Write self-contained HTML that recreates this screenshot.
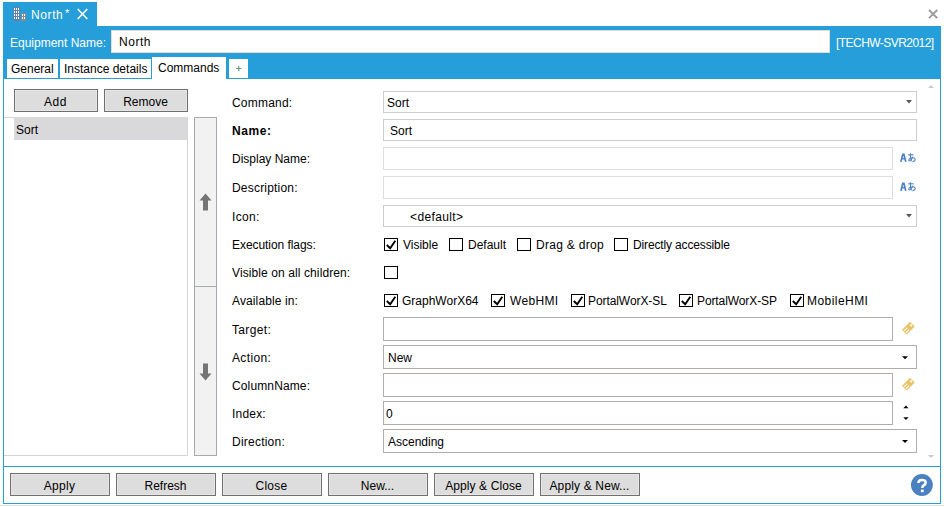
<!DOCTYPE html>
<html><head><meta charset="utf-8">
<style>
*{box-sizing:border-box;margin:0;padding:0}
html,body{width:944px;height:507px;overflow:hidden;background:#fff}
body{position:relative;font-family:"Liberation Sans",sans-serif;font-size:12px;color:#000}
.a{position:absolute}
.t{position:absolute;white-space:pre;line-height:14px}
.blue{background:#259ed9}
.tab{position:absolute;background:#fff;top:59px;height:19px}
.btn{position:absolute;background:#dddddd;border:1px solid #707070;box-shadow:inset 0 0 0 1px #e6e6e6;text-align:center;line-height:14px;padding-top:5px;text-indent:-1px}
.fld{position:absolute;left:383px;border:1px solid #cfcccf;background:#fff}
.lbl{position:absolute;left:232px;white-space:pre;line-height:14px}
.cb{position:absolute;width:14px;height:13px;border:1px solid #000;background:#fff}
.cb svg{position:absolute;left:0;top:0}
.ck{position:absolute;white-space:pre;line-height:14px}
</style></head>
<body>
<!-- tab header -->
<div class="a blue" style="left:3px;top:2px;width:94px;height:24px"></div>
<svg class="a" style="left:13px;top:7px" width="14" height="15" viewBox="0 0 14 15">
  <rect x="0" y="0" width="7" height="14" fill="#5c81b3"/>
  <g fill="#fff">
    <rect x="1" y="1" width="1" height="2"/><rect x="3" y="1" width="1" height="2"/><rect x="5" y="1" width="1" height="2"/>
    <rect x="1" y="4" width="1" height="2"/><rect x="3" y="4" width="1" height="2"/><rect x="5" y="4" width="1" height="2"/>
    <rect x="1" y="7" width="1" height="2"/><rect x="3" y="7" width="1" height="2"/><rect x="5" y="7" width="1" height="2"/>
    <rect x="1" y="10" width="1" height="2"/><rect x="3" y="10" width="1" height="2"/><rect x="5" y="10" width="1" height="2"/>
  </g>
  <rect x="8" y="6" width="5" height="8" fill="#8a8a8a"/>
  <g fill="#fff">
    <rect x="9" y="7" width="1" height="2"/><rect x="11" y="7" width="1" height="2"/>
    <rect x="9" y="10" width="1" height="2"/><rect x="11" y="10" width="1" height="2"/>
  </g>
</svg>
<div class="t" style="left:31px;top:8px;color:#fff;letter-spacing:0.6px">North</div>
<div class="t" style="left:65px;top:6px;color:#fff;font-size:11px">*</div>
<svg class="a" style="left:77px;top:8px" width="11" height="12" viewBox="0 0 11 12"><path d="M0.7 1L10.3 11M10.3 1L0.7 11" stroke="#fff" stroke-width="1.6"/></svg>
<!-- window close -->
<svg class="a" style="left:928px;top:9px" width="10" height="10" viewBox="0 0 10 10"><path d="M1 1L9.2 9.2M9.2 1L1 9.2" stroke="#9a9a9a" stroke-width="1.9"/></svg>

<!-- blue frame -->
<div class="a blue" style="left:3px;top:26px;width:938px;height:53px"></div>
<div class="a blue" style="left:3px;top:79px;width:1px;height:425px"></div>
<div class="a blue" style="left:940px;top:79px;width:1px;height:425px"></div>
<div class="a blue" style="left:3px;top:466px;width:938px;height:1px"></div>
<div class="a blue" style="left:3px;top:503px;width:938px;height:1px"></div>
<div class="a" style="left:0;top:505px;width:944px;height:1px;background:#e4e4e4"></div>

<div class="t" style="left:10px;top:36px;color:#fff">Equipment Name:</div>
<div class="a" style="left:111px;top:30px;width:719px;height:23px;background:#fff;border:1px solid #e8dcd0"></div>
<div class="t" style="left:119px;top:35px;letter-spacing:0.55px">North</div>
<div class="t" style="left:836px;top:36px;color:#fff;letter-spacing:-0.55px">[TECHW-SVR2012]</div>

<!-- tabs -->
<div class="tab" style="left:7px;width:51px"></div>
<div class="t" style="left:11px;top:62px">General</div>
<div class="tab" style="left:60px;width:91px"></div>
<div class="t" style="left:64px;top:62px">Instance details</div>
<div class="tab" style="left:152px;top:57px;width:74px;height:23px"></div>
<div class="t" style="left:158px;top:61px">Commands</div>
<div class="tab" style="left:229px;width:19px"></div>
<svg class="a" style="left:235px;top:65px" width="8" height="8" viewBox="0 0 8 8"><path d="M1 3.5H6.5M3.75 0.8V6.3" stroke="#6a9886" stroke-width="1.15"/></svg>

<!-- left panel -->
<div class="btn" style="left:14px;top:89px;width:84px;height:23px;letter-spacing:0.6px">Add</div>
<div class="btn" style="left:104px;top:89px;width:84px;height:23px">Remove</div>
<div class="a" style="left:4px;top:117px;width:184px;height:339px;border:1px solid #d6d4d6;border-left:none;background:#fff"></div>
<div class="a" style="left:14px;top:117px;width:173px;height:23px;background:#d9d8da"></div>
<div class="t" style="left:16px;top:123px">Sort</div>

<div class="a" style="left:194px;top:117px;width:23px;height:170px;background:#f2f2f2;border:1px solid #a5abaf"></div>
<div class="a" style="left:194px;top:286px;width:23px;height:170px;background:#f2f2f2;border:1px solid #a5abaf"></div>
<svg class="a" style="left:199px;top:193px" width="13" height="18" viewBox="0 0 13 18"><path d="M6.5 0.5L12.5 7.5H9V17.5H4V7.5H0.5Z" fill="#757575"/></svg>
<svg class="a" style="left:199px;top:363px" width="13" height="18" viewBox="0 0 13 18"><path d="M6.5 17.5L12.5 10.5H9V0.5H4V10.5H0.5Z" fill="#757575"/></svg>

<!-- labels -->
<div class="lbl" style="top:96px;letter-spacing:0.2px">Command:</div>
<div class="lbl" style="top:124px;font-weight:bold;letter-spacing:0.55px">Name:</div>
<div class="lbl" style="top:152px">Display Name:</div>
<div class="lbl" style="top:181px;letter-spacing:0.2px">Description:</div>
<div class="lbl" style="top:210px;letter-spacing:0.3px">Icon:</div>
<div class="lbl" style="top:238px;letter-spacing:-0.06px">Execution flags:</div>
<div class="lbl" style="top:266px;letter-spacing:0.1px">Visible on all children:</div>
<div class="lbl" style="top:294px;letter-spacing:0.12px">Available in:</div>
<div class="lbl" style="top:323px;letter-spacing:0.35px">Target:</div>
<div class="lbl" style="top:351px;letter-spacing:0.35px">Action:</div>
<div class="lbl" style="top:379px;letter-spacing:0.13px">ColumnName:</div>
<div class="lbl" style="top:407px;letter-spacing:0.2px">Index:</div>
<div class="lbl" style="top:435px;letter-spacing:0.23px">Direction:</div>

<!-- fields -->
<div class="fld" style="top:91px;width:534px;height:22px"></div>
<div class="t" style="left:387px;top:96px">Sort</div>
<svg class="a" style="left:906px;top:100px" width="6" height="4"><path d="M0 0H6L3 3.6Z" fill="#5a5a5a"/></svg>

<div class="fld" style="top:119px;width:534px;height:22px"></div>
<div class="t" style="left:390px;top:124px">Sort</div>

<div class="fld" style="top:147px;width:510px;height:23px;border-color:#dcdce6"></div>

<div class="fld" style="top:176px;width:510px;height:23px;border-color:#dcdce6"></div>


<div class="fld" style="top:205px;width:534px;height:22px"></div>
<div class="t" style="left:410px;top:210px;letter-spacing:0.38px">&lt;default&gt;</div>
<svg class="a" style="left:906px;top:214px" width="6" height="4"><path d="M0 0H6L3 3.6Z" fill="#5a5a5a"/></svg>

<!-- checkbox rows -->
<div class="cb" style="left:384px;top:238px"><svg width="12" height="11"><path d="M1.8 6L5.2 9.2L10.3 1.8" fill="none" stroke="#000" stroke-width="1.9"/></svg></div><div class="ck" style="left:403px;top:238px">Visible</div>
<div class="cb" style="left:449px;top:238px"></div><div class="ck" style="left:468px;top:238px">Default</div>
<div class="cb" style="left:517px;top:238px"></div><div class="ck" style="left:536px;top:238px;letter-spacing:0.3px">Drag &amp; drop</div>
<div class="cb" style="left:614px;top:238px"></div><div class="ck" style="left:633px;top:238px;letter-spacing:-0.14px">Directly accessible</div>

<div class="cb" style="left:384px;top:266px"></div>

<div class="cb" style="left:384px;top:294px"><svg width="12" height="11"><path d="M1.8 6L5.2 9.2L10.3 1.8" fill="none" stroke="#000" stroke-width="1.9"/></svg></div><div class="ck" style="left:402px;top:294px">GraphWorX64</div>
<div class="cb" style="left:491px;top:294px"><svg width="12" height="11"><path d="M1.8 6L5.2 9.2L10.3 1.8" fill="none" stroke="#000" stroke-width="1.9"/></svg></div><div class="ck" style="left:510px;top:294px;letter-spacing:0.35px">WebHMI</div>
<div class="cb" style="left:571px;top:294px"><svg width="12" height="11"><path d="M1.8 6L5.2 9.2L10.3 1.8" fill="none" stroke="#000" stroke-width="1.9"/></svg></div><div class="ck" style="left:588px;top:294px;letter-spacing:-0.08px">PortalWorX-SL</div>
<div class="cb" style="left:679px;top:294px"><svg width="12" height="11"><path d="M1.8 6L5.2 9.2L10.3 1.8" fill="none" stroke="#000" stroke-width="1.9"/></svg></div><div class="ck" style="left:697px;top:294px;letter-spacing:-0.1px">PortalWorX-SP</div>
<div class="cb" style="left:790px;top:294px"><svg width="12" height="11"><path d="M1.8 6L5.2 9.2L10.3 1.8" fill="none" stroke="#000" stroke-width="1.9"/></svg></div><div class="ck" style="left:807px;top:294px;letter-spacing:0.45px">MobileHMI</div>

<div class="fld" style="top:317px;width:510px;height:24px;border-color:#b0acaa"></div>
<div class="fld" style="top:345px;width:534px;height:24px;border-color:#b0acaa"></div>
<div class="t" style="left:388px;top:351px">New</div>
<svg class="a" style="left:902px;top:356px" width="6" height="4"><path d="M0 0.3H6L3 3.3Z" fill="#000"/></svg>
<div class="fld" style="top:373px;width:510px;height:24px;border-color:#b0acaa"></div>
<div class="fld" style="top:401px;width:510px;height:24px;border-color:#b0acaa"></div>
<div class="t" style="left:386px;top:407px">0</div>
<svg class="a" style="left:903px;top:405px" width="6" height="4"><path d="M0.3 3.3H5.5L2.9 0.5Z" fill="#000"/></svg>
<svg class="a" style="left:903px;top:417px" width="6" height="4"><path d="M0.3 0.2H5.5L2.9 3Z" fill="#000"/></svg>
<div class="fld" style="top:429px;width:534px;height:24px;border-color:#b0acaa"></div>
<div class="t" style="left:388px;top:435px">Ascending</div>
<svg class="a" style="left:902px;top:440px" width="6" height="4"><path d="M0 0.1H6L3 3.1Z" fill="#000"/></svg>

<!-- scroll arrows -->
<svg class="a" style="left:928px;top:85px" width="6" height="3"><path d="M0 3H6L3 0Z" fill="#ccc9cc"/></svg>
<svg class="a" style="left:928px;top:455px" width="6" height="3"><path d="M0 0H6L3 3Z" fill="#ccc9cc"/></svg>

<!-- bottom buttons -->
<div class="btn" style="left:10px;top:473px;width:100px;height:23px;letter-spacing:0.3px">Apply</div>
<div class="btn" style="left:116px;top:473px;width:100px;height:23px">Refresh</div>
<div class="btn" style="left:222px;top:473px;width:100px;height:23px;letter-spacing:0.25px">Close</div>
<div class="btn" style="left:328px;top:473px;width:100px;height:23px">New...</div>
<div class="btn" style="left:434px;top:473px;width:100px;height:23px;letter-spacing:0.1px">Apply &amp; Close</div>
<div class="btn" style="left:540px;top:473px;width:100px;height:23px;letter-spacing:0.15px">Apply &amp; New...</div>

<!-- help -->
<svg class="a" style="left:906px;top:470px" width="32" height="32" viewBox="906 470 32 32"><circle cx="921.9" cy="485" r="10.9" fill="#4a81c0"/><path d="M918.4 483Q918.4 479.9 922 479.9Q925.7 479.9 925.7 482.6Q925.7 484.2 924 485.1Q922.3 486 922.3 487.9" fill="none" stroke="#fff" stroke-width="2.5"/><rect x="920.9" y="489.6" width="2.8" height="2.6" fill="#fff"/></svg>
<svg class="a" style="left:0;top:0" width="944" height="507" viewBox="0 0 944 507">
<g transform="translate(897 150)" fill="none" stroke="#4a80c4">
  <path d="M3.9 11.9L5.8 4.3H6.9L8.8 11.9" stroke-width="1.7"/><path d="M4.8 8.8H7.9" stroke-width="1.3"/>
  <path d="M11.2 4.8H16.6" stroke-width="1.1"/><path d="M13.4 3.2Q13.3 8 14.4 11.4" stroke-width="1.1"/>
  <path d="M15.9 6.6Q13.8 11.3 12.3 10.9Q11.2 10.2 12.6 8.6Q15 7.2 17.4 8.1Q19 9.6 17.4 11Q16.6 11.6 15.5 11.6" stroke-width="1.05"/>
</g><g transform="translate(897 179)" fill="none" stroke="#4a80c4">
  <path d="M3.9 11.9L5.8 4.3H6.9L8.8 11.9" stroke-width="1.7"/><path d="M4.8 8.8H7.9" stroke-width="1.3"/>
  <path d="M11.2 4.8H16.6" stroke-width="1.1"/><path d="M13.4 3.2Q13.3 8 14.4 11.4" stroke-width="1.1"/>
  <path d="M15.9 6.6Q13.8 11.3 12.3 10.9Q11.2 10.2 12.6 8.6Q15 7.2 17.4 8.1Q19 9.6 17.4 11Q16.6 11.6 15.5 11.6" stroke-width="1.05"/>
</g><g transform="translate(908.4 328.2) rotate(-45)">
  <rect x="-5.65" y="-3.3" width="11.3" height="6.6" fill="#ecc066"/>
  <path d="M-4.6 -1.1H-0.6M-4.6 1.5H-0.6" stroke="#fff" stroke-width="1.3" stroke-dasharray="1.9 0.5"/>
  <rect x="3" y="-1" width="2" height="2" fill="#fff"/>
</g><g transform="translate(908.4 384.2) rotate(-45)">
  <rect x="-5.65" y="-3.3" width="11.3" height="6.6" fill="#ecc066"/>
  <path d="M-4.6 -1.1H-0.6M-4.6 1.5H-0.6" stroke="#fff" stroke-width="1.3" stroke-dasharray="1.9 0.5"/>
  <rect x="3" y="-1" width="2" height="2" fill="#fff"/>
</g>
</svg>
</body></html>
